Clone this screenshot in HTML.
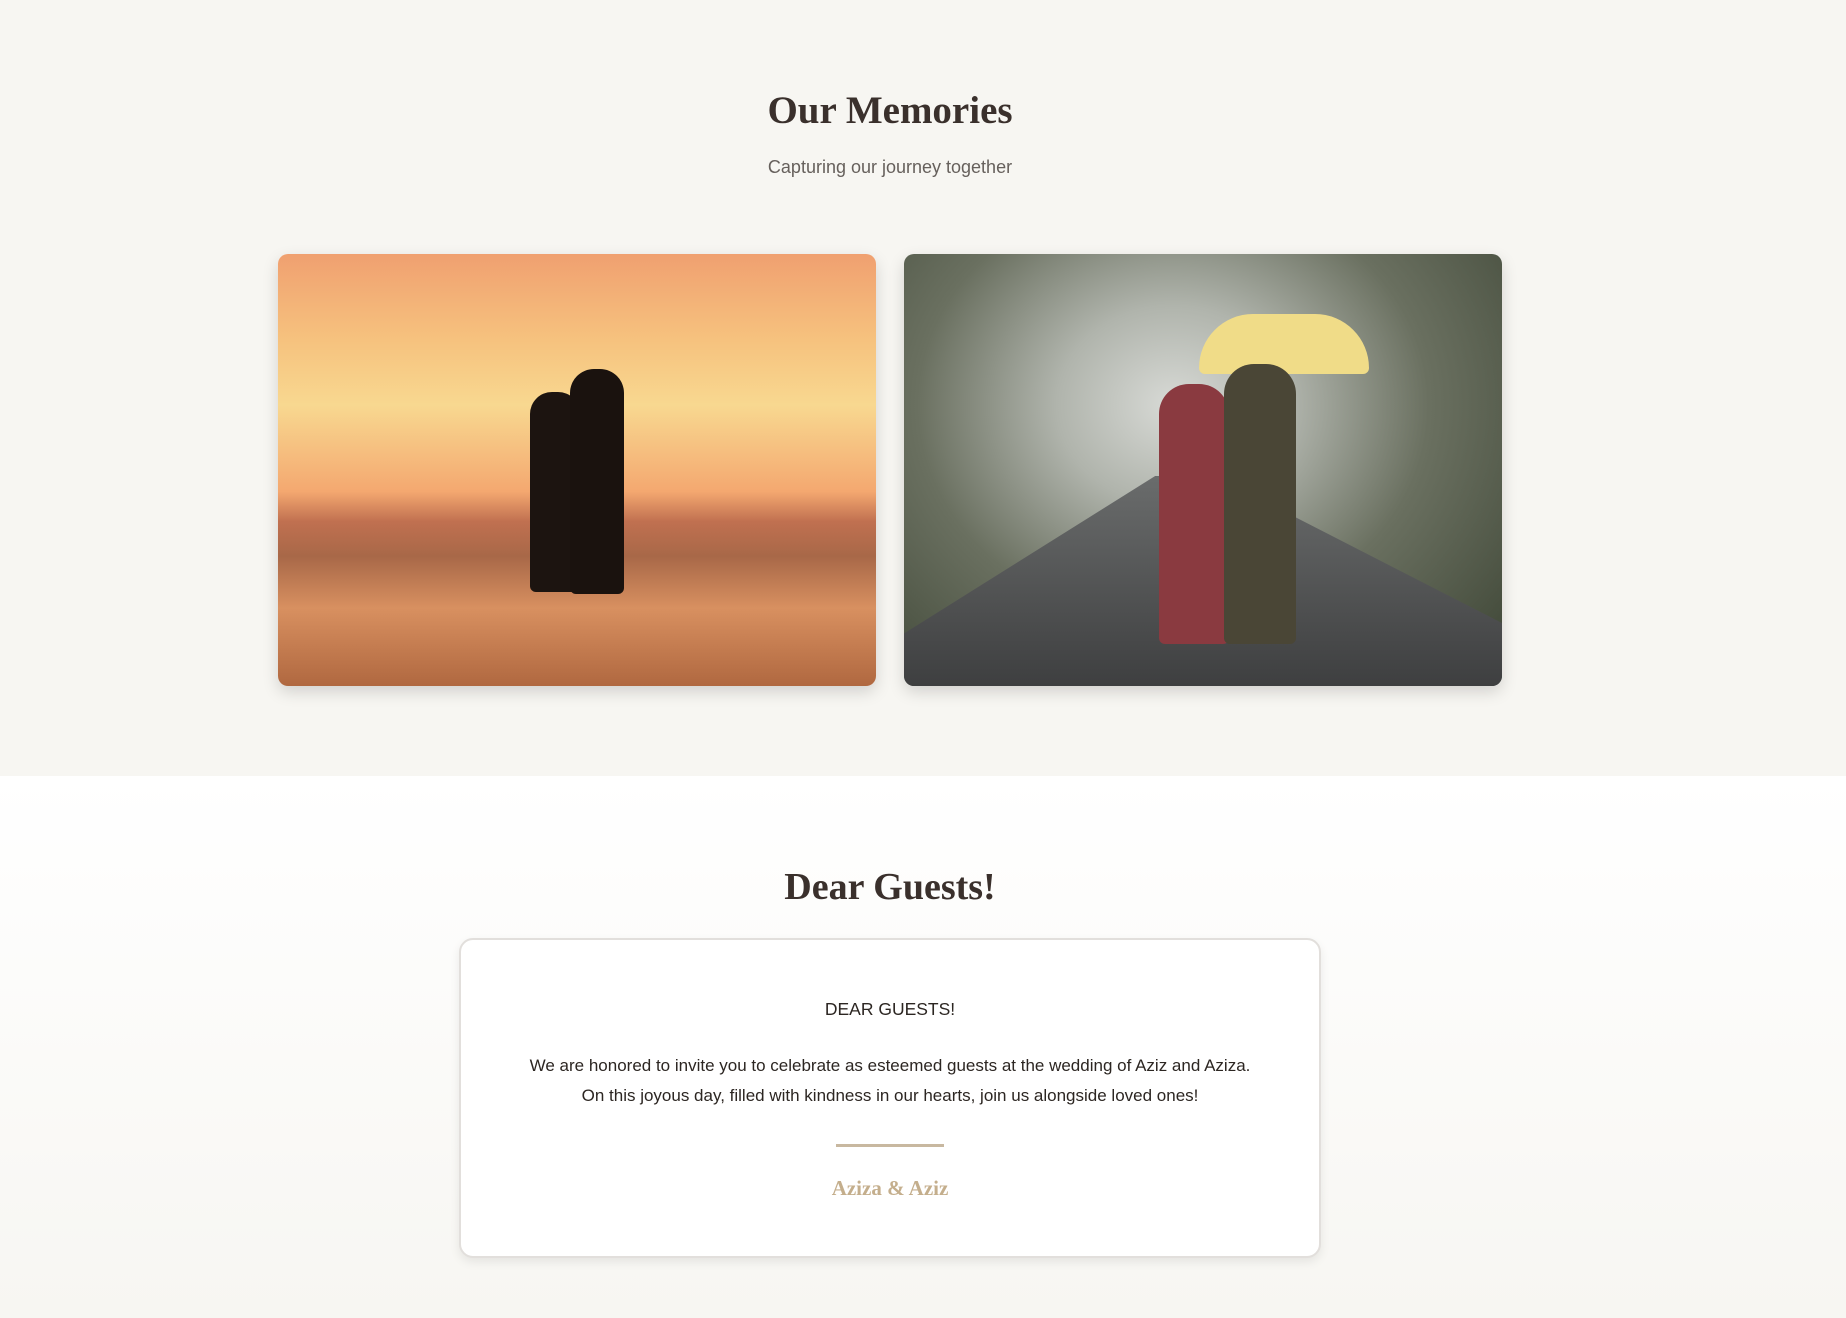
<!DOCTYPE html>
<html><head><meta charset="utf-8"><style>
*{margin:0;padding:0;box-sizing:border-box}
body{width:1846px;height:1318px;overflow:hidden;background:#f7f6f2;font-family:"Liberation Sans",sans-serif}
.s1{position:absolute;left:0;top:0;width:1846px;height:776px;background:#f7f6f2}
.s2{position:absolute;left:0;top:776px;width:1846px;height:542px;background:linear-gradient(#ffffff,#f7f6f2)}
h2{position:absolute;left:0;width:1780px;text-align:center;font-family:"Liberation Serif",serif;font-weight:bold;color:#3a302c}
.sub{position:absolute;left:0;top:157px;width:1780px;text-align:center;font-size:18px;color:#66605c}
.img{position:absolute;top:254px;width:598px;height:432px;border-radius:10px;box-shadow:0 6px 16px rgba(0,0,0,.15);overflow:hidden}
.a{left:278px;background:linear-gradient(180deg,#f0a070 0%,#f6c27e 20%,#f8d890 35%,#f4a870 55%,#c07050 62%,#a86848 70%,#d89060 82%,#b06840 100%)}
.b{left:904px;background:radial-gradient(ellipse at 45% 35%,#d8dad6 0%,#b0b4ac 25%,#6a7060 55%,#3a4232 100%)}
.road{position:absolute;left:0;bottom:0;width:598px;height:210px;background:linear-gradient(#6a6c6c,#3e3f40);clip-path:polygon(42% 0,52% 0,100% 70%,100% 100%,0 100%,0 75%)}
.card{position:absolute;left:459px;top:938px;width:862px;height:320px;background:#fff;border:2px solid #e2dfdc;border-radius:14px;box-shadow:0 4px 10px rgba(0,0,0,.08);text-align:center;color:#2c2622}
</style></head><body>
<div class="s1"></div><div class="s2"></div>
<h2 style="top:88px;font-size:39px">Our Memories</h2>
<div class="sub">Capturing our journey together</div>
<div class="img a">
<div style="position:absolute;left:252px;top:138px;width:50px;height:200px;background:#1c1410;border-radius:22px 22px 6px 6px"></div>
<div style="position:absolute;left:292px;top:115px;width:54px;height:225px;background:#1a120e;border-radius:24px 24px 6px 6px"></div>
</div>
<div class="img b"><div class="road"></div>
<div style="position:absolute;left:295px;top:60px;width:170px;height:60px;background:#f0dc88;border-radius:90px 90px 10px 10px"></div>
<div style="position:absolute;left:255px;top:130px;width:70px;height:260px;background:#8a3a40;border-radius:30px 30px 6px 6px"></div>
<div style="position:absolute;left:320px;top:110px;width:72px;height:280px;background:#4a4636;border-radius:30px 30px 6px 6px"></div>
</div>
<h2 style="top:865px;font-size:38px">Dear Guests!</h2>
<div class="card">
<div style="position:absolute;top:59px;width:100%;font-size:17.5px">DEAR GUESTS!</div>
<div style="position:absolute;top:111px;width:100%;font-size:17px;line-height:30px">We are honored to invite you to celebrate as esteemed guests at the wedding of Aziz and Aziza.<br>On this joyous day, filled with kindness in our hearts, join us alongside loved ones!</div>
<div style="position:absolute;top:204px;left:375px;width:108px;height:3px;background:#c8b8a0"></div>
<div style="position:absolute;top:236px;width:100%;font-family:'Liberation Serif',serif;font-weight:bold;font-size:21px;color:#c4ae8c">Aziza &amp; Aziz</div>
</div>
</body></html>
